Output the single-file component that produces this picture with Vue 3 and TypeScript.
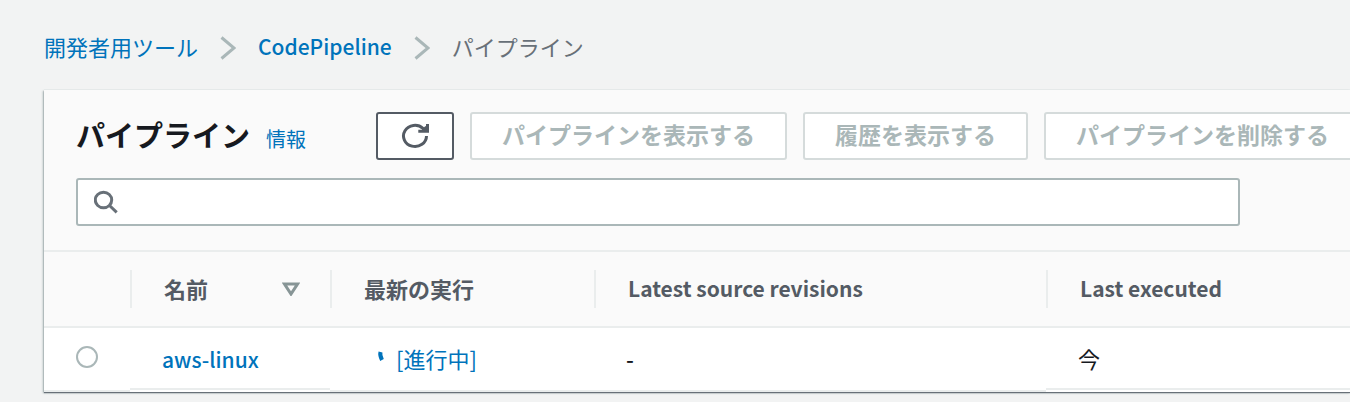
<script setup lang="ts">
import { ref } from 'vue'

interface Pipeline {
  name: string
  status: string
  revision: string
  executed: string
}

const query = ref('')
const selected = ref('')
const actions: string[] = ['パイプラインを表示する', '履歴を表示する', 'パイプラインを削除する']
const pipelines: Pipeline[] = [
  { name: 'aws-linux', status: '[進行中]', revision: '-', executed: '今' },
]
</script>

<template>
  <div class="page">
    <nav class="crumbs" aria-label="breadcrumb">
      <a href="#">開発者用ツール</a>
      <svg class="chevron" viewBox="0 0 16 24" aria-hidden="true"><path d="M1.500 1.500L14 12 1.500 22.500" /></svg>
      <a href="#" class="latin">CodePipeline</a>
      <svg class="chevron" viewBox="0 0 16 24" aria-hidden="true"><path d="M1.500 1.500L14 12 1.500 22.500" /></svg>
      <span>パイプライン</span>
    </nav>

    <main class="panel">
      <header class="head">
        <div class="bar">
          <div class="title">
            <h1>パイプライン</h1>
            <a href="#">情報</a>
          </div>
          <div class="actions">
            <button type="button" class="btn refresh" aria-label="更新">
              <svg viewBox="0 0 28 28" aria-hidden="true">
                <path d="M25.500 14A11.500 10.600 0 1 1 22 6.300L24.500 8.500" />
                <path d="M17.300 9.200h9.200V2" />
                <path d="M22 8.500L25.500 5" />
              </svg>
            </button>
            <button v-for="action in actions" :key="action" type="button" class="btn" disabled>{{ action }}</button>
          </div>
        </div>
        <div class="search">
          <svg viewBox="0 0 24 24" aria-hidden="true">
            <ellipse cx="9.500" cy="10" rx="8.200" ry="7.800" />
            <path d="M15.500 15.500l7.200 6.800" />
          </svg>
          <input v-model="query" type="text" aria-label="パイプラインを検索" />
        </div>
      </header>

      <table>
        <colgroup>
          <col class="c-select" /><col class="c-name" /><col class="c-run" /><col class="c-source" /><col />
        </colgroup>
        <thead>
          <tr>
            <td></td>
            <th scope="col">
              <div class="cell sortable">
                名前
                <svg viewBox="0 0 18 16" aria-hidden="true"><path d="M2.500 4h13L9 14z" /></svg>
              </div>
            </th>
            <th scope="col"><div class="cell">最新の実行</div></th>
            <th scope="col"><div class="cell latin">Latest source revisions</div></th>
            <th scope="col"><div class="cell latin">Last executed</div></th>
          </tr>
        </thead>
        <tbody>
          <tr v-for="p in pipelines" :key="p.name">
            <td class="select"><input v-model="selected" type="radio" name="pipeline" :value="p.name" :aria-label="p.name" /></td>
            <td class="name raised"><a href="#" class="latin">{{ p.name }}</a></td>
            <td class="run">
              <a href="#">
                <svg viewBox="0 0 8 12" aria-hidden="true"><path d="M3.500 1C2.800 3.500 3.500 6 5 9" /></svg>
                {{ p.status }}
              </a>
            </td>
            <td class="revision">{{ p.revision }}</td>
            <td class="raised">{{ p.executed }}</td>
          </tr>
        </tbody>
      </table>
    </main>
  </div>
</template>

<style>
body {
  margin: 0;
  background: #f2f3f3;
}
</style>

<style scoped>
.page {
  box-sizing: border-box;
  min-height: 100vh;
  padding: 28px 0 9px 44px;
  overflow: hidden;
  background: #f2f3f3;
  color: #16191f;
  font-family: "Noto Sans CJK JP", sans-serif;
  font-size: 22px;
  line-height: 36px;
}

a {
  color: #0073bb;
  text-decoration: none;
}

svg {
  flex: none;
  fill: none;
  stroke: currentColor;
}

.latin {
  font-size: 21px;
}

.crumbs {
  display: flex;
  align-items: center;
  gap: 22px;
  margin-bottom: 26px;
  color: #687078;
  white-space: nowrap;
}

.crumbs .latin {
  font-weight: 500;
}

.chevron {
  width: 16px;
  height: 24px;
  margin-top: 4px;
  color: #aab7b8;
  stroke-width: 3;
}

.panel {
  background: #fff;
  box-shadow: 0 1px 1px #687078, -1px 1px 2px #aab7b8, 0 -1px 0 #eaeded;
}

.head {
  padding: 22px 0 24px 32px;
  background: #fafafa;
  border-bottom: 2px solid #eaeded;
}

.bar,
.title,
.actions {
  display: flex;
  white-space: nowrap;
}

.bar {
  height: 48px;
  gap: 70px;
}

.title {
  align-items: baseline;
  gap: 16px;
}

h1 {
  margin: 0;
  font-size: 29px;
  line-height: 44px;
}

.title a {
  font-size: 20px;
}

.actions {
  gap: 16px;
}

.btn {
  flex: none;
  box-sizing: border-box;
  height: 48px;
  padding: 0 30px 4px;
  border: 2px solid #d5dbdb;
  border-radius: 3px;
  background: #fff;
  color: #aab7b8;
  font: inherit;
  font-size: 23px;
  font-weight: 700;
  line-height: 40px;
}

.refresh {
  display: flex;
  align-items: center;
  justify-content: center;
  width: 78px;
  padding: 0;
  border-color: #545b64;
  color: #545b64;
}

.refresh svg {
  width: 28px;
  height: 28px;
  stroke-width: 3;
}

.search {
  display: flex;
  align-items: center;
  gap: 12px;
  box-sizing: border-box;
  height: 48px;
  margin: 18px 110px 0 0;
  padding: 0 16px;
  border: 2px solid #aab7b8;
  border-radius: 3px;
  background: #fff;
}

.search svg {
  width: 24px;
  height: 24px;
  color: #687078;
  stroke-width: 3;
}

.search input {
  flex: 1;
  min-width: 0;
  padding: 0;
  border: 0;
  outline: 0;
  background: transparent;
  font: inherit;
}

table {
  width: 100%;
  border-collapse: separate;
  border-spacing: 0;
  table-layout: fixed;
}

.c-select {
  width: 86px;
}

.c-name {
  width: 200px;
}

.c-run {
  width: 264px;
}

.c-source {
  width: 452px;
}

thead {
  background: #fafafa;
  color: #545b64;
}

th,
td {
  padding: 0;
  text-align: left;
  white-space: nowrap;
}

thead th,
thead td {
  padding: 18px 0;
  border-bottom: 2px solid #eaeded;
}

.cell {
  padding: 0 0 2px 32px;
  border-left: 2px solid #eaeded;
}

.sortable {
  display: flex;
  align-items: center;
  justify-content: space-between;
  padding-right: 30px;
}

.sortable svg {
  width: 18px;
  height: 16px;
  color: #879596;
  stroke-width: 3;
}

tbody td {
  box-sizing: border-box;
  height: 64px;
  padding: 0 0 4px 32px;
  background: linear-gradient(#eaeded, #eaeded) 0 100% / 100% 2px no-repeat;
}

tbody .raised {
  background-position: 0 calc(100% - 2px);
}

.select input {
  display: block;
  appearance: none;
  box-sizing: border-box;
  width: 22px;
  height: 22px;
  margin: 0 0 2px;
  border: 2px solid #aab7b8;
  border-radius: 50%;
  background: #fff;
}

.select input:checked {
  border: 6px solid #0073bb;
}

.name .latin,
.revision {
  font-weight: 500;
}

.run a {
  display: flex;
  align-items: center;
  gap: 11px;
  padding-left: 15px;
}

.run svg {
  width: 8px;
  height: 12px;
  margin-bottom: 2px;
  stroke-width: 4;
}
</style>
